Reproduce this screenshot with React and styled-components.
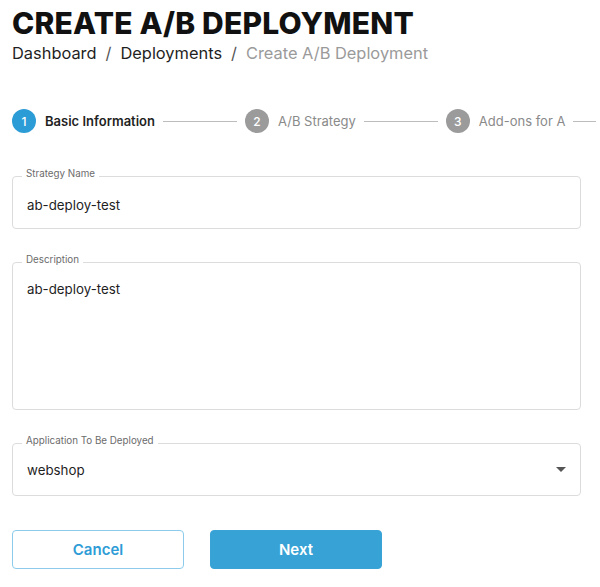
import React from "react";
import styled, { createGlobalStyle } from "styled-components";

const Global = createGlobalStyle`
  html, body { margin: 0; padding: 0; background: #fff; }
  body { font-family: Inter, "Noto Sans", "Liberation Sans", sans-serif; color: #1a1a1a; }
  * { box-sizing: border-box; }
`;

const Page = styled.div`
  padding: 0 19px 0 12px;
  width: 600px;
`;

const Title = styled.h1`
  margin: 0;
  padding-top: 8px;
  font-size: 30px;
  line-height: 30px;
  font-weight: 800;
  letter-spacing: 0.2px;
  color: #111;
`;

const Crumbs = styled.nav`
  display: flex;
  gap: 9px;
  margin-top: 5px;
  font-size: 16.4px;
  line-height: 20px;
  color: #1f1f1f;
`;

const Crumb = styled.span`
  color: ${(p) => (p.$current ? "#9a9a9a" : "#1f1f1f")};
`;

const Sep = styled.span`
  color: #555;
`;

const Stepper = styled.div`
  display: flex;
  align-items: center;
  width: 584px;
  overflow: hidden;
  margin-top: 45px;
  height: 26px;
`;

const Step = styled.div`
  display: flex;
  align-items: center;
  flex-shrink: 0;
  gap: 9px;
`;

const Circle = styled.span`
  width: 24px;
  height: 24px;
  border-radius: 50%;
  background: ${(p) => (p.$active ? "#2c9cd6" : "#9b9b9b")};
  color: #fff;
  font-size: 12px;
  font-weight: 500;
  display: flex;
  align-items: center;
  justify-content: center;
`;

const StepLabel = styled.span`
  font-size: 13px;
  font-weight: ${(p) => (p.$active ? 600 : 400)};
  color: ${(p) => (p.$active ? "#1f1f1f" : "#8a8a8a")};
  white-space: nowrap;
`;

const Line = styled.span`
  flex-shrink: 0;
  width: 74px;
  height: 1px;
  background: #bdbdbd;
  margin: 0 8px;
`;

const Form = styled.div`
  display: flex;
  flex-direction: column;
  gap: 33px;
  margin-top: 42px;
`;

const Field = styled.div`
  position: relative;
  height: ${(p) => p.$h}px;
  border: 1px solid #dcdcdc;
  border-radius: 4px;
  padding: ${(p) => (p.$multiline ? "17px 14px 0" : "0 14px")};
  display: flex;
  align-items: ${(p) => (p.$multiline ? "flex-start" : "center")};
  justify-content: space-between;
`;

const Label = styled.span`
  position: absolute;
  left: 9px;
  top: -9px;
  padding: 0 4px;
  background: #fff;
  font-size: 9.8px;
  line-height: 12px;
  color: #6b6b6b;
`;

const Value = styled.span`
  font-size: 13.3px;
  line-height: 18px;
  color: #1f1f1f;
  padding-top: ${(p) => p.$offset || 0}px;
`;

const Caret = styled.span`
  width: 0;
  height: 0;
  border-left: 5px solid transparent;
  border-right: 5px solid transparent;
  border-top: 5px solid #555;
`;

const Actions = styled.div`
  display: flex;
  gap: 26px;
  margin-top: 34px;
`;

const Button = styled.button`
  width: 172px;
  height: 39px;
  border-radius: 4px;
  font-family: inherit;
  font-size: 15px;
  font-weight: 600;
  cursor: pointer;
  border: 1.5px solid ${(p) => (p.$primary ? "#3aa3d6" : "#8ccbeb")};
  background: ${(p) => (p.$primary ? "#36a2d6" : "#fff")};
  color: ${(p) => (p.$primary ? "#fff" : "#2e9cd6")};
`;

const steps = [
  { n: 1, label: "Basic Information", active: true },
  { n: 2, label: "A/B Strategy" },
  { n: 3, label: "Add-ons for A" },
];

export default function App() {
  return (
    <Page>
      <Global />
      <Title>CREATE A/B DEPLOYMENT</Title>
      <Crumbs>
        <Crumb>Dashboard</Crumb>
        <Sep>/</Sep>
        <Crumb>Deployments</Crumb>
        <Sep>/</Sep>
        <Crumb $current>Create A/B Deployment</Crumb>
      </Crumbs>
      <Stepper>
        {steps.map((s) => (
          <React.Fragment key={s.n}>
            <Step>
              <Circle $active={s.active}>{s.n}</Circle>
              <StepLabel $active={s.active}>{s.label}</StepLabel>
            </Step>
            <Line />
          </React.Fragment>
        ))}
      </Stepper>
      <Form>
        <Field $h={53}>
          <Label>Strategy Name</Label>
          <Value $offset={5}>ab-deploy-test</Value>
        </Field>
        <Field $h={148} $multiline>
          <Label>Description</Label>
          <Value>ab-deploy-test</Value>
        </Field>
        <Field $h={53}>
          <Label>Application To Be Deployed</Label>
          <Value>webshop</Value>
          <Caret />
        </Field>
      </Form>
      <Actions>
        <Button>Cancel</Button>
        <Button $primary>Next</Button>
      </Actions>
    </Page>
  );
}
